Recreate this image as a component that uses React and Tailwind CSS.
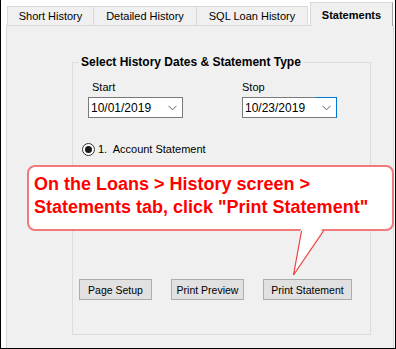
import React from "react";

const Chevron = () => (
  <svg width="9" height="6" viewBox="0 0 9 6" className="shrink-0">
    <path d="M0.5 0.8 L4.5 4.8 L8.5 0.8" fill="none" stroke="#606060" strokeWidth="1" />
  </svg>
);

function Combo({ value, focus }) {
  return (
    <div className="relative flex items-center justify-between w-[95px] h-[21px] bg-white border border-[#7a7a7a] pl-[2px] pr-[5px] text-[12px] leading-[14px]">
      <span>{value}</span>
      <Chevron />
      {focus && (
        <div className="absolute top-[-1px] right-[-1px] bottom-[-1px] w-[21px] border-t border-r border-[#0078d7]" />
      )}
    </div>
  );
}

function Btn({ w, children }) {
  return (
    <div className={`${w} h-[21px] flex items-center justify-center bg-[#e1e1e1] border border-[#adadad] text-[10.5px] leading-[12px]`}>
      {children}
    </div>
  );
}

export default function App() {
  return (
    <div
      className="relative w-[396px] h-[349px] bg-white border-l border-r border-b border-black overflow-hidden text-black"
      style={{ fontFamily: '"Liberation Sans", Arial, sans-serif' }}
    >
      {/* tab strip */}
      <div className="flex items-end h-[25px] pl-[6px]">
        <div className="w-[87px] h-[19px] flex items-center justify-center bg-[#f0f0f0] border border-b-0 border-[#d9d9d9] text-[11px]">
          Short History
        </div>
        <div className="w-[103px] h-[19px] flex items-center justify-center bg-[#f0f0f0] border border-l-0 border-b-0 border-[#d9d9d9] text-[11px]">
          Detailed History
        </div>
        <div className="w-[111px] h-[19px] flex items-center justify-center bg-[#f0f0f0] border border-l-0 border-b-0 border-[#d9d9d9] text-[11px]">
          SQL Loan History
        </div>
        <div className="relative z-10 ml-[2px] mb-[-1px] w-[83px] h-[24px] flex items-start justify-center pt-[4px] bg-[#f0f0f0] border border-b-0 border-[#d9d9d9] border-r-[#a0a0a0] text-[11px] font-bold">
          Statements
        </div>
      </div>

      {/* panel */}
      <div className="ml-[5px] w-[388px] h-[324px] bg-[#f0f0f0] border border-[#d9d9d9]">
        <fieldset className="ml-[65px] mt-[29px] w-[299px] h-[280px] border border-[#dcdcdc] flex flex-col">
          <legend className="ml-[6px] px-[2px] text-[12px] leading-[14px] font-bold">
            Select History Dates &amp; Statement Type
          </legend>

          <div className="flex mt-[12px] ml-[15px] gap-[59px]">
            <div className="flex flex-col gap-[3px]">
              <div className="pl-[4px] text-[11px] leading-[13px]">Start</div>
              <Combo value="10/01/2019" />
            </div>
            <div className="flex flex-col gap-[3px]">
              <div className="text-[11px] leading-[13px]">Stop</div>
              <Combo value="10/23/2019" focus />
            </div>
          </div>

          <div className="flex items-center mt-[25px] ml-[9px] gap-[3px] text-[11px] leading-[13px]">
            <div className="w-[13px] h-[13px] rounded-full border border-[#333] bg-white flex items-center justify-center">
              <div className="w-[7px] h-[7px] rounded-full bg-[#1a1a1a]" />
            </div>
            <span className="whitespace-pre">1.  Account Statement</span>
          </div>

          <div className="flex mt-[123px] ml-[6px] gap-[19px]">
            <Btn w="w-[73px]">Page Setup</Btn>
            <Btn w="w-[73px]">Print Preview</Btn>
            <Btn w="w-[89px]">Print Statement</Btn>
          </div>
        </fieldset>
      </div>

      {/* callout */}
      <div className="absolute left-[26px] top-[165px] w-[367px] h-[66px] bg-white border-2 border-[#f07a7a] rounded-[8px] pl-[5px] pt-[6px] text-[18px] leading-[23px] font-bold text-[#ff0000] whitespace-nowrap">
        <div>On the Loans &gt; History screen &gt;</div>
        <div>Statements tab, click "Print Statement"</div>
      </div>
      <svg className="absolute left-[285px] top-[226px]" width="45" height="52" viewBox="0 0 45 52">
        <polygon points="15,2 37,2 7.5,49" fill="white" />
        <path d="M15.5 5 L7.5 49 L37.5 5" fill="none" stroke="#f03c3c" strokeWidth="1.2" />
      </svg>
    </div>
  );
}
